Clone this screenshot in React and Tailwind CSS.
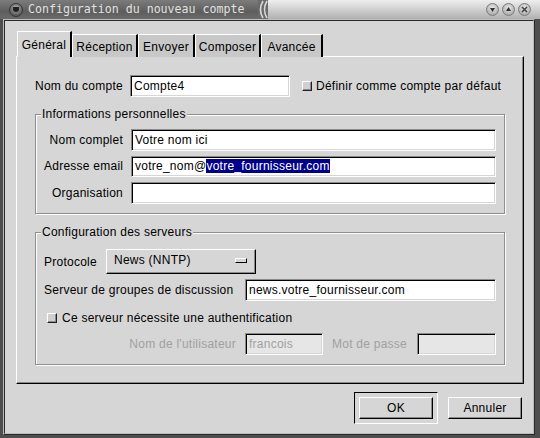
import React from "react";

const FONT = { fontFamily: '"Liberation Sans", Arial, sans-serif' };

const sunken =
  "border border-t-[#8a8a8a] border-l-[#8a8a8a] border-r-white border-b-white shadow-[inset_1px_1px_0_#000,inset_-1px_-1px_0_#d6d6d6]";
const raised =
  "border border-t-white border-l-white border-r-black border-b-black shadow-[inset_-1px_-1px_0_#8a8a8a]";

function Input({ w, children, disabled, h = "h-[22px]" }) {
  return (
    <div
      className={`${sunken} ${h} flex items-center px-[3px] text-[12px] whitespace-nowrap ${
        disabled ? "bg-[#e6e6e6] text-[#a0a0a0]" : "bg-white text-black"
      } ${w}`}
    >
      {children}
    </div>
  );
}

function Check() {
  return (
    <div className="w-[10px] h-[10px] shrink-0 bg-[#d0d0d0] border border-t-white border-l-white border-r-[#202020] border-b-[#202020] shadow-[inset_-1px_-1px_0_#8a8a8a]" />
  );
}

function Group({ label, children, cls }) {
  return (
    <div
      className={`relative border border-[#8e8e8e] shadow-[inset_1px_1px_0_#fff,1px_1px_0_#fff] ${cls}`}
    >
      <div className="absolute left-[5px] -top-[9px] px-[1px] bg-[#d6d6d6] text-[12px] leading-[16px]">
        {label}
      </div>
      {children}
    </div>
  );
}

function Circle({ children }) {
  return (
    <div className="w-[13px] h-[13px] rounded-full bg-[radial-gradient(circle_at_50%_35%,#e8e8e8,#9a9a9a)] border border-[#7a7a7a] flex items-center justify-center">
      {children}
    </div>
  );
}

export default function App() {
  return (
    <div
      className="w-[540px] h-[438px] bg-[#4e4e4e] flex flex-col text-black tracking-[0.25px]"
      style={FONT}
    >
      {/* title bar */}
      <div className="h-[19px] flex shrink-0 tracking-normal">
        <div className="w-[258px] h-full bg-[linear-gradient(#7c7c7c,#5e5e5e_60%,#6a6a6a)] flex items-center">
          <div className="ml-[9px] w-[14px] h-[14px] rounded-full bg-[radial-gradient(circle_at_50%_35%,#b0b0b0,#3a3a3a)] flex items-center justify-center border border-[#333]">
            <div className="w-[6px] h-[5px] rounded-b-full bg-[#222]" />
          </div>
          <span
            className="ml-[5px] text-[11.6px] text-[#e2e2e2] leading-none"
            style={{ fontFamily: '"DejaVu Sans Mono", "Liberation Mono", monospace' }}
          >
            Configuration du nouveau compte
          </span>
        </div>
        <svg width="10" height="19" className="shrink-0 bg-[#6a6a6a]">
          <path d="M5 1 Q0 9.5 5 18" stroke="#d8d8d8" strokeWidth="1.6" fill="none" />
          <path d="M9 1 Q4 9.5 9 18" stroke="#d8d8d8" strokeWidth="1.6" fill="none" />
        </svg>
        <div className="flex-1 h-full bg-[linear-gradient(#eeeeee,#d0d0d0_50%,#b0b0b0)] flex items-center justify-end pr-[9px] gap-[3px]">
          <Circle>
            <svg width="7" height="7" viewBox="0 0 7 7">
              <path d="M1 2 L6 2 L3.5 6 Z" fill="#303030" />
            </svg>
          </Circle>
          <Circle>
            <svg width="7" height="7" viewBox="0 0 7 7">
              <path d="M1 5 L6 5 L3.5 1 Z" fill="#303030" />
            </svg>
          </Circle>
          <Circle>
            <svg width="7" height="7" viewBox="0 0 7 7">
              <path d="M1 1 L6 6 M6 1 L1 6" stroke="#404040" strokeWidth="1.5" />
            </svg>
          </Circle>
        </div>
      </div>

      {/* window body frame */}
      <div className="flex-1 flex flex-col pl-[3px] pr-[5px] pb-[3px]">
        <div className="flex-1 flex flex-col border border-t-[#bcbcbc] border-l-[#bcbcbc] border-r-[#2a2a2a] border-b-[#2a2a2a]">
          <div className="flex-1 flex flex-col bg-[#d6d6d6] border border-t-[#2a2a2a] border-l-[#2a2a2a] border-r-[#bcbcbc] border-b-[#bcbcbc] pl-[11px] pr-[9px] pt-[10px]">
            {/* tabs */}
            <div className="flex items-end h-[26px] text-[12px] relative z-10 pl-[1px]">
              <div className="h-[26px] pt-[4px] bg-[#d6d6d6] border-l border-t border-l-white border-t-white border-r-2 border-r-black w-[55px] flex justify-center">
                <span>Général</span>
              </div>
              {["Réception", "Envoyer", "Composer", "Avancée"].map((t, i) => (
                <div
                  key={t}
                  className={`h-[23px] pt-[3px] bg-[#c8c8c8] border-l border-t border-l-white border-t-white border-r-2 border-r-black flex justify-center ${
                    ["w-[66px]", "w-[57px]", "w-[66px]", "w-[62px]"][i]
                  }`}
                >
                  {t}
                </div>
              ))}
            </div>
            {/* panel */}
            <div className="-mt-[1px] h-[328px] border border-t-white border-l-white border-r-black border-b-black shadow-[inset_-1px_-1px_0_#8a8a8a] px-[18px] pt-[18px] text-[12px]">
              <div className="flex items-center h-[22px]">
                <div className="w-[95px] whitespace-nowrap">Nom du compte</div>
                <Input w="w-[160px]">Compte4</Input>
                <div className="ml-[12px] mr-[4px]">
                  <Check />
                </div>
                <span className="whitespace-nowrap">Définir comme compte par défaut</span>
              </div>

              <Group label="Informations personnelles" cls="mt-[17px] h-[100px] px-[8px] pt-[14px]">
                <div className="flex flex-col gap-[5px]">
                  {[
                    ["Nom complet", <span>Votre nom ici</span>],
                    [
                      "Adresse email",
                      <span>
                        votre_nom@
                        <span className="bg-[#00008c] text-white">votre_fournisseur.com</span>
                      </span>,
                    ],
                    ["Organisation", null],
                  ].map(([l, v]) => (
                    <div key={l} className="flex items-center gap-[8px]">
                      <div className="w-[79px] text-right whitespace-nowrap">{l}</div>
                      <Input w="flex-1" h="h-[21.5px]">{v}</Input>
                    </div>
                  ))}
                </div>
              </Group>

              <Group label="Configuration des serveurs" cls="mt-[18px] h-[133px] px-[8px] pt-[16px]">
                <div className="flex items-center h-[25px]">
                  <div className="w-[62px]">Protocole</div>
                  <div className={`${raised} w-[150px] h-[25px] flex items-center pl-[7px] pr-[8px] pb-[3px]`}>
                    <span className="flex-1">News (NNTP)</span>
                    <div className="w-[12px] h-[5px] bg-[#d6d6d6] border border-t-white border-l-white border-r-black border-b-black" />
                  </div>
                </div>
                <div className="flex items-center mt-[5px] h-[22px]">
                  <div className="w-[201px] whitespace-nowrap">Serveur de groupes de discussion</div>
                  <Input w="flex-1">news.votre_fournisseur.com</Input>
                </div>
                <div className="flex items-center mt-[6px] h-[22px] pl-[3px]">
                  <Check />
                  <span className="ml-[5px] whitespace-nowrap">Ce serveur nécessite une authentification</span>
                </div>
                <div className="flex items-center mt-[4px] h-[22px] text-[#a0a0a0]">
                  <div className="w-[192px] text-right whitespace-nowrap">Nom de l'utilisateur</div>
                  <div className="ml-[9px]">
                    <Input w="w-[78px]" disabled>francois</Input>
                  </div>
                  <div className="ml-[9px] w-[76px] whitespace-nowrap">Mot de passe</div>
                  <div className="ml-[9px]">
                    <Input w="w-[79px]" disabled />
                  </div>
                </div>
              </Group>
            </div>
            {/* buttons */}
            <div className="flex justify-end mt-[8px] pr-[2px] text-[12px]">
              <div className="border border-t-black border-l-black border-r-white border-b-white p-[4px]">
                <div className={`${raised} w-[74px] h-[22px] flex items-center justify-center`}>OK</div>
              </div>
              <div className="ml-[10px] mt-[5px]">
                <div className={`${raised} w-[74px] h-[22px] flex items-center justify-center`}>Annuler</div>
              </div>
            </div>
          </div>
        </div>
      </div>
    </div>
  );
}
